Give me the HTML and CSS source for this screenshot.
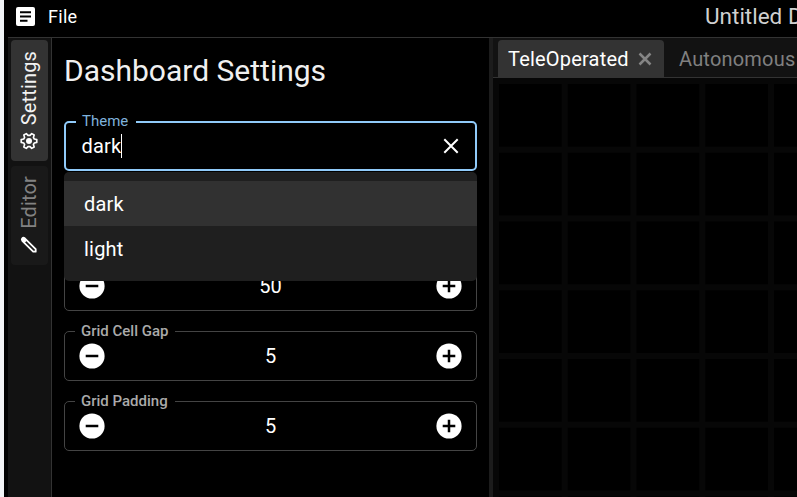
FILE: index.html
```html
<!DOCTYPE html>
<html lang="en">
<head>
<meta charset="utf-8">
<title>Dashboard</title>
<link rel="stylesheet" href="styles.css">
</head>
<body>
<svg class="defs" width="0" height="0">
  <symbol id="minus" viewBox="0 0 26 26"><circle cx="13" cy="13" r="12.6" fill="#fff"/><path d="M6.7 13h12.6" stroke="#000" stroke-width="2.5"/></symbol>
  <symbol id="plus" viewBox="0 0 26 26"><circle cx="13" cy="13" r="12.6" fill="#fff"/><path d="M6.7 13h12.6M13 6.7v12.6" stroke="#000" stroke-width="2.5"/></symbol>
</svg>
<div class="window">
  <header class="menubar">
    <svg class="logo" viewBox="0 0 19 19"><rect width="19" height="19" rx="2" fill="#fff"/><path d="M4 5.2h11M4 9.5h11M4 13.8h7.5" stroke="#000" stroke-width="2.1"/></svg>
    <span class="file">File</span>
    <span class="doc-title">Untitled Dashboard</span>
  </header>
  <div class="main">
    <nav class="rail">
      <div class="rail-tab rail-active">
        <span>Settings</span>
        <svg width="18" height="18" viewBox="0 0 18 18"><g transform="rotate(90 9 9)"><path d="M7.6 1.2h2.800l.6 2.500 1.500.9 2.500-.8 1.400 2.500-1.800 1.700v2l1.800 1.700-1.400 2.500-2.500-.8-1.500.9-.6 2.500H7.600L7 14.300l-1.500-.9-2.500.8-1.400-2.500L3.400 10V8L1.600 6.300 3 3.800l2.500.8L7 3.700z" fill="none" stroke="#fff" stroke-width="1.600" stroke-linejoin="round"/></g><circle cx="9" cy="9" r="3" fill="#fff"/></svg>
      </div>
      <div class="rail-tab rail-editor">
        <span>Editor</span>
        <svg width="18" height="18" viewBox="0 0 18 18"><path d="M2.300 4.800Q1.300 3.300 2.300 2.300T4.800 2.300L15.700 13.200V15.700H13.200z" fill="none" stroke="#fff" stroke-width="1.800" stroke-linejoin="round"/><path d="M2 2.200Q3.200 1 4.800 2.300L7 4.500 4.500 7 2.300 4.800Q1 3.300 2 2.200z" fill="#fff"/></svg>
      </div>
    </nav>
    <section class="panel">
      <h1>Dashboard Settings</h1>
      <div class="field focused">
        <label>Theme</label>
        <span class="value">dark</span><i class="caret"></i>
        <svg class="clear" width="16" height="16" viewBox="0 0 16 16"><path d="M1.300 1.300l13.400 13.400M14.700 1.300L1.300 14.700" stroke="#fff" stroke-width="2"/></svg>
        <div class="dropdown">
          <div class="option selected">dark</div>
          <div class="option">light</div>
        </div>
      </div>
      <div class="field number first"><svg width="26" height="26"><use href="#minus"/></svg><span>50</span><svg width="26" height="26"><use href="#plus"/></svg></div>
      <div class="field number"><label>Grid Cell Gap</label><svg width="26" height="26"><use href="#minus"/></svg><span>5</span><svg width="26" height="26"><use href="#plus"/></svg></div>
      <div class="field number"><label>Grid Padding</label><svg width="26" height="26"><use href="#minus"/></svg><span>5</span><svg width="26" height="26"><use href="#plus"/></svg></div>
    </section>
    <div class="splitter"></div>
    <section class="workspace">
      <div class="tabs">
        <div class="tab tab-active"><span>TeleOperated</span><svg width="14" height="14" viewBox="0 0 14 14"><path d="M1.500 1.500l11 11M12.500 1.500l-11 11" stroke="#858585" stroke-width="2.500"/></svg></div>
        <div class="tab"><span>Autonomous</span></div>
      </div>
      <div class="grid"></div>
    </section>
  </div>
</div>
</body>
</html>
```

FILE: styles.css
```css
* { box-sizing: border-box; }
body { margin: 0; height: 497px; overflow: hidden; background: #000; font-family: Roboto, sans-serif; color: #fff; }
.defs { display: block; }
.window { height: 497px; border-left: 4px solid #f1f3f6; padding-left: 4px; display: flex; flex-direction: column; background: #000; overflow: hidden; }
.menubar { flex: none; height: 38px; border-bottom: 1px solid #333; display: flex; align-items: center; padding: 0 0 5px 8px; white-space: nowrap; }
.logo { flex: none; width: 19px; height: 19px; margin-right: 13px; }
.file { font-size: 18px; letter-spacing: 0.3px; width: 657px; flex: none; }
.doc-title { font-size: 22.5px; color: #d0d0d0; }
.main { flex: 1; min-height: 0; display: flex; }
.rail { flex: none; width: 44px; background: #121212; border-right: 1px solid #333; padding: 2px 3px; display: flex; flex-direction: column; gap: 5px; }
.rail-tab { width: 37px; background: #191919; border-radius: 4px; display: flex; flex-direction: column; align-items: center; justify-content: flex-end; gap: 7px; font-size: 20px; letter-spacing: 0.15px; color: #828282; }
.rail-tab span { writing-mode: vertical-rl; transform: rotate(180deg); line-height: 26px; }
.rail-active { height: 121px; background: #333; color: #f2f2f2; padding: 0 1px 11px 0; }
.rail-editor { height: 99px; padding: 0 1px 11px 0; }
.panel { flex: none; width: 437px; padding: 15px 12px; }
h1 { margin: 0 0 33px; font-size: 30px; line-height: 35px; font-weight: 400; color: #f0f0f0; }
.field { position: relative; height: 50px; border: 1px solid #444; border-radius: 5px; margin-bottom: 20px; display: flex; align-items: center; font-size: 20px; }
.field label { position: absolute; left: 10px; top: -10px; padding: 0 7px 0 6px; background: #000; font-size: 15px; font-weight: 500; letter-spacing: 0; line-height: 18px; color: #aaa; }
.focused { border: 2px solid #90caf9; padding: 0 16px 0 15.500px; margin-bottom: 90px; }
.focused .value { letter-spacing: 0.2px; }
.focused label { top: -11px; font-weight: 400; color: #7fb2dc; padding: 0 8px 0 6px; }
.caret { width: 1px; height: 24px; background: #fff; }
.clear { margin-left: auto; }
.dropdown { position: absolute; z-index: 2; left: -2px; right: -2px; top: 49px; padding: 9px 0 10px; background: #1f1f1f; border-radius: 5px; }
.option { height: 45px; line-height: 46px; padding: 0 0 0 20px; letter-spacing: 0.2px; }
.selected { background: #313131; }
.number { justify-content: space-between; padding: 0 14px; }
.splitter { flex: none; width: 4px; background: #1c1c1c; }
.workspace { flex: 1; min-width: 0; display: flex; flex-direction: column; overflow: hidden; }
.tabs { flex: none; height: 40px; padding: 2px 0 0 5px; background: #121212; border-bottom: 1px solid #333; display: flex; gap: 5px; }
.tab { flex: none; display: flex; align-items: center; gap: 9px; padding: 0 10px; font-size: 20px; letter-spacing: 0.2px; color: #808080; border-radius: 4px 4px 0 0; }
.tab-active { width: 166px; background: #333; color: #fff; }
.grid { flex: 1; background-image: linear-gradient(to right, #070707 6px, transparent 6px), linear-gradient(to bottom, #070707 6px, transparent 6px); background-size: 68.75px 68.75px; }
```
